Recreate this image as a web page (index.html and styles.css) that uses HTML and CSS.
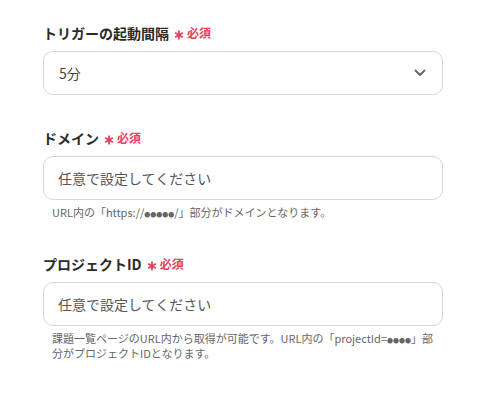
FILE: index.html
```html
<!DOCTYPE html>
<html lang="ja">
<head>
  <meta charset="UTF-8">
  <meta name="viewport" content="width=device-width, initial-scale=1.0">
  <title>トリガー設定</title>
  <link rel="stylesheet" href="styles.css">
</head>
<body>
  <div class="form">
    <div class="field">
      <div class="field-label">トリガーの起動間隔<span class="req"><svg class="star" width="10" height="10" viewBox="0 0 10 10"><path d="M5 0.5 V9.5 M1.1 2.75 L8.9 7.25 M1.1 7.25 L8.9 2.75" stroke="#e5405e" stroke-width="1.8"/></svg>必須</span></div>
      <div class="select-box">
        <span class="value">5分</span>
        <svg class="chevron" width="12" height="8" viewBox="0 0 12 8">
          <path d="M1.5 1.5 L6 6 L10.5 1.5" fill="none" stroke="#666" stroke-width="2" stroke-linecap="round" stroke-linejoin="round"/>
        </svg>
      </div>
    </div>

    <div class="field">
      <div class="field-label">ドメイン<span class="req"><svg class="star" width="10" height="10" viewBox="0 0 10 10"><path d="M5 0.5 V9.5 M1.1 2.75 L8.9 7.25 M1.1 7.25 L8.9 2.75" stroke="#e5405e" stroke-width="1.8"/></svg>必須</span></div>
      <input class="text-input" type="text" placeholder="任意で設定してください">
      <p class="help">URL内の「https://<span class="dots">●●●●●</span>/」部分がドメインとなります。</p>
    </div>

    <div class="field">
      <div class="field-label">プロジェクトID<span class="req"><svg class="star" width="10" height="10" viewBox="0 0 10 10"><path d="M5 0.5 V9.5 M1.1 2.75 L8.9 7.25 M1.1 7.25 L8.9 2.75" stroke="#e5405e" stroke-width="1.8"/></svg>必須</span></div>
      <input class="text-input" type="text" placeholder="任意で設定してください">
      <p class="help">課題一覧ページのURL内から取得が可能です。URL内の「projectId=<span class="dots">●●●●</span>」部分がプロジェクトIDとなります。</p>
    </div>
  </div>
</body>
</html>
```

FILE: styles.css
```css
body {
  margin: 0;
  background: #fff;
  font-family: "Noto Sans CJK JP", "Noto Sans", sans-serif;
  color: #333;
}

.form {
  width: 400px;
  padding: 23px 0 0 43px;
  display: flex;
  flex-direction: column;
  gap: 33px;
}

.field-label {
  font-size: 14px;
  line-height: 20px;
  font-weight: 700;
  color: #2b2b2b;
  margin-bottom: 8px;
  display: flex;
  align-items: center;
}

.req {
  display: inline-flex;
  align-items: center;
  margin-left: 5px;
  color: #e5405e;
  font-size: 12px;
  font-weight: 700;
}

.star {
  margin-right: 3px;
  margin-top: 3px;
}

.select-box,
.text-input {
  box-sizing: border-box;
  width: 400px;
  height: 44px;
  border: 1px solid #d4d7dd;
  border-radius: 10px;
  background: #fff;
}

.select-box {
  display: flex;
  align-items: center;
  justify-content: space-between;
  padding: 0 15px 0 15px;
  font-size: 14px;
  color: #444;
}

.chevron {
  margin-right: 1px;
}

.text-input {
  display: block;
  padding: 0 14px;
  font-family: "Noto Sans CJK JP", "Noto Sans", sans-serif;
  font-size: 14px;
  color: #333;
  outline: none;
}

.text-input::placeholder {
  color: #555;
}

.help {
  margin: 5px 0 1px;
  padding: 0 6px 0 9px;
  font-size: 11px;
  line-height: 15px;
  color: #666;
}

.dots {
  font-size: 6px;
  line-height: 1;
}
```
